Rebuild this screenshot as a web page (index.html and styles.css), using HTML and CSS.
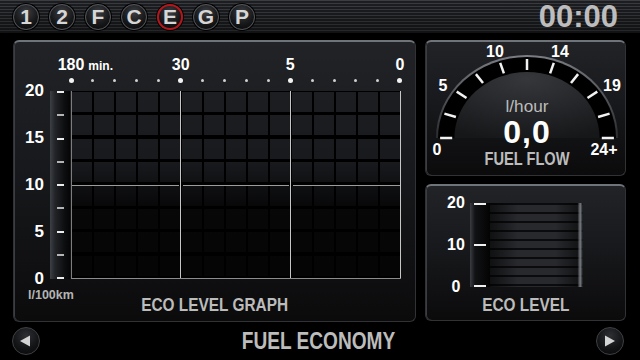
FILE: index.html
```html
<!DOCTYPE html>
<html lang="en">

<head>
  <meta charset="UTF-8" />
  <meta name="viewport" content="width=device-width, initial-scale=1.0" />
  <title>Fuel Economy</title>
  <link rel="stylesheet" href="styles.css">
</head>

<body>
  <div class="screen">

    <header class="topbar">
      <nav class="modes">
        <span class="mode">1</span>
        <span class="mode">2</span>
        <span class="mode">F</span>
        <span class="mode">C</span>
        <span class="mode active">E</span>
        <span class="mode">G</span>
        <span class="mode">P</span>
      </nav>
      <div class="clock">00:00</div>
    </header>

    <main class="content">

      <!-- eco level history graph -->
      <section class="panel graph-panel">
        <div class="xaxis">
          <div class="xlabels">
            <span class="xl"><b>180<i class="min">min.</i></b></span>
            <span class="xl"><b>30</b></span>
            <span class="xl"><b>5</b></span>
            <span class="xl"><b>0</b></span>
          </div>
          <div class="xdots">
            <span class="dot big"></span><span class="dot"></span><span class="dot"></span><span class="dot"></span><span class="dot"></span>
            <span class="dot big"></span><span class="dot"></span><span class="dot"></span><span class="dot"></span><span class="dot"></span>
            <span class="dot big"></span><span class="dot"></span><span class="dot"></span><span class="dot"></span><span class="dot"></span>
            <span class="dot big"></span>
          </div>
        </div>

        <div class="plot-row">
          <div class="ylabels">
            <span>20</span>
            <span>15</span>
            <span>10</span>
            <span>5</span>
            <span>0</span>
          </div>
          <div class="ybar">
            <i></i><i class="minor"></i><i></i><i class="minor"></i><i></i><i class="minor"></i><i></i><i class="minor"></i><i></i>
          </div>
          <div class="plot">
            <span class="hline h1"></span>
            <span class="hline h2"></span>
            <span class="hline h3"></span>
            <span class="vline v1"></span>
            <span class="vline v2"></span>
            <span class="vline v3"></span>
          </div>
        </div>

        <div class="graph-foot">
          <div class="unit">l/100km</div>
          <div class="panel-title"><span>ECO LEVEL GRAPH</span></div>
          <div></div>
        </div>
      </section>

      <div class="side">
        <!-- fuel flow gauge -->
        <section class="panel gauge-panel">
          <svg class="gauge" viewBox="426 42 199 133" width="199" height="133">
            <defs>
              <linearGradient id="rim" x1="0" y1="0" x2="0" y2="1">
                <stop offset="0" stop-color="#7a7d83" />
                <stop offset="1" stop-color="#2a2b2f" />
              </linearGradient>
              <radialGradient id="dome" cx="0.5" cy="0.1" r="0.95">
                <stop offset="0" stop-color="#35373b" />
                <stop offset="1" stop-color="#161719" />
              </radialGradient>
            </defs>
            <path d="M436 138 A91 83 0 0 1 618 138 Z" fill="url(#rim)" />
            <path d="M438 138 A89 81 0 0 1 616 138 Z" fill="#000" />
            <path d="M454.4 138 A72.6 66 0 0 1 599.6 138 Z" fill="url(#dome)" />
            <g stroke="#f2f2f2" stroke-width="2.5">
              <line x1="452.2" y1="138" x2="440.1" y2="138" />
              <line x1="455.9" y1="117" x2="444.4" y2="113.6" />
              <line x1="466.5" y1="98" x2="456.7" y2="91.6" />
              <line x1="483" y1="83" x2="475.9" y2="74.1" />
              <line x1="503.9" y1="73.3" x2="500.2" y2="62.9" />
              <line x1="527" y1="70" x2="527" y2="59" />
              <line x1="550.1" y1="73.3" x2="553.8" y2="62.9" />
              <line x1="571" y1="83" x2="578.1" y2="74.1" />
              <line x1="587.5" y1="98" x2="597.3" y2="91.6" />
              <line x1="598.1" y1="117" x2="609.6" y2="113.6" />
              <line x1="601.8" y1="138" x2="613.9" y2="138" />
            </g>
            <text class="g-num" x="437" y="155">0</text>
            <text class="g-num" x="443" y="91">5</text>
            <text class="g-num" x="495" y="57">10</text>
            <text class="g-num" x="560" y="57">14</text>
            <text class="g-num" x="612" y="91">19</text>
            <text class="g-num" x="604" y="155">24+</text>
            <text class="g-unit" x="505.5" y="112" textLength="43" lengthAdjust="spacingAndGlyphs">l/hour</text>
            <text class="g-value" x="527" y="143">0,0</text>
            <text class="g-title" x="484.5" y="165" textLength="85" lengthAdjust="spacingAndGlyphs">FUEL FLOW</text>
          </svg>
        </section>

        <!-- current eco level -->
        <section class="panel eco-panel">
          <div class="eco-scale">
            <div class="eco-labels">
              <span>20</span>
              <span>10</span>
              <span>0</span>
            </div>
            <div class="eco-bar">
              <i></i><i></i><i></i>
            </div>
            <div class="eco-box"></div>
          </div>
          <div class="panel-title"><span>ECO LEVEL</span></div>
        </section>
      </div>

    </main>

    <footer class="bottombar">
      <button class="nav-btn prev" aria-label="Previous">
        <svg width="12" height="12" viewBox="0 0 12 12"><polygon points="1,6 11,0.5 11,11.5" fill="#d4d4d4" /></svg>
      </button>
      <h1 class="page-title">FUEL ECONOMY</h1>
      <button class="nav-btn next" aria-label="Next">
        <svg width="12" height="12" viewBox="0 0 12 12"><polygon points="11,6 1,0.5 1,11.5" fill="#d4d4d4" /></svg>
      </button>
    </footer>

  </div>
</body>

</html>
```

FILE: styles.css
```css
* {
  box-sizing: border-box;
}

body {
  margin: 0;
  background: #000;
  font-family: "Liberation Sans", Arial, sans-serif;
  color: #fff;
}

.screen {
  width: 640px;
  height: 360px;
  overflow: hidden;
  display: flex;
  flex-direction: column;
  background: #000;
}

/* top bar */
.topbar {
  flex: none;
  height: 33px;
  display: flex;
  align-items: center;
  padding: 0 22px 0 13px;
  background:
    linear-gradient(to bottom, rgba(0, 0, 0, 0) 0%, rgba(0, 0, 0, 0.4) 100%),
    repeating-linear-gradient(to bottom, #3c3d41 0 1px, #1d1e21 1px 3px);
}

.modes {
  display: flex;
  gap: 10px;
}

.mode {
  width: 26px;
  height: 26px;
  border-radius: 50%;
  display: flex;
  align-items: center;
  justify-content: center;
  font-size: 21px;
  font-weight: 700;
  color: #d6d6d6;
  background: radial-gradient(circle at 50% 30%, #3d3e42 0%, #18191b 55%, #050505 100%);
  border: 1px solid #55565a;
  box-shadow: 0 0 0 1px #000;
}

.mode.active {
  border: 2px solid #b5161b;
}

.clock {
  margin-left: auto;
  font-size: 31px;
  font-weight: 700;
  color: #bdbdbd;
}

/* main area */
.content {
  flex: none;
  height: 289px;
  display: flex;
  gap: 9px;
  padding: 7px 14px 0 13px;
}

.panel {
  border-radius: 6px;
  border: 1px solid #303236;
  border-top: 2px solid #6f737a;
  background: linear-gradient(to bottom, #222327 0%, #18191c 45%, #0b0b0c 100%);
  box-shadow: inset 1px 0 0 #3b3d42;
}

.panel-title {
  font-size: 19px;
  font-weight: 700;
  line-height: 20px;
  color: #bcbcbc;
  text-align: center;
}

.panel-title span {
  display: inline-block;
  transform: scaleX(0.81);
}

.graph-panel {
  width: 403px;
  height: 282px;
  padding-top: 15px;
}

.xaxis {
  margin-left: 57px;
}

.xlabels {
  width: 329px;
  height: 16px;
  display: flex;
  justify-content: space-between;
}

.xl {
  width: 0;
  display: flex;
  justify-content: center;
  font-size: 16px;
  line-height: 16px;
  white-space: nowrap;
}

.xl b {
  position: relative;
}

.xl .min {
  position: absolute;
  left: calc(100% + 4px);
  bottom: 1px;
  font-size: 12px;
  line-height: 12px;
  font-style: normal;
}

.xdots {
  margin: 4px 0 0 -3px;
  width: 335px;
  height: 6px;
  display: flex;
  justify-content: space-between;
}

.dot {
  width: 6px;
  height: 6px;
  display: flex;
  align-items: center;
  justify-content: center;
}

.dot::before {
  content: "";
  width: 3px;
  height: 3px;
  border-radius: 50%;
  background: #d0d0d0;
}

.dot.big::before {
  width: 5px;
  height: 5px;
  background: #f2f2f2;
}

.plot-row {
  margin-top: 8px;
  height: 188px;
  display: flex;
}

.ylabels {
  width: 30px;
  margin: -8px 0;
  display: flex;
  flex-direction: column;
  justify-content: space-between;
  align-items: flex-end;
  font-size: 17px;
  font-weight: 700;
  line-height: 16px;
}

.ybar {
  margin-left: 6px;
  width: 20px;
  display: flex;
  flex-direction: column;
  justify-content: space-between;
  align-items: center;
  background: linear-gradient(to right, #3d4045 0%, #222428 25%, #0e0f11 70%, #050505 100%);
}

.ybar i {
  width: 7px;
  height: 2px;
  background: #ececec;
}

.ybar i.minor {
  background: #b4b4b4;
}

.plot {
  position: relative;
  margin-left: 1px;
  width: 330px;
  height: 188px;
  border-left: 1px solid #7d7d7d;
  border-bottom: 1px solid #8c8c8c;
  background:
    linear-gradient(to bottom, rgba(0, 0, 0, 0) 0%, rgba(0, 0, 0, 0.15) 38%, rgba(0, 0, 0, 0.75) 62%, rgba(0, 0, 0, 0.85) 100%),
    repeating-linear-gradient(to right, rgba(0, 0, 0, 0) 0 20px, #000 20px 22px),
    repeating-linear-gradient(to bottom, #000 0 1px, rgba(0, 0, 0, 0) 1px 21px, #000 21px 23.4px),
    #1d1e22;
}

.vline {
  position: absolute;
  top: 0;
  bottom: 0;
  width: 1px;
  background: #c6c6c6;
}

.v1 { left: 108px; }
.v2 { left: 218px; }
.v3 { left: 328px; }

.hline {
  position: absolute;
  top: 94px;
  height: 1px;
  background: #9c9c9c;
}

.h1 { left: 0; width: 107px; }
.h2 { left: 111px; width: 106px; }
.h3 { left: 221px; width: 107px; }

.graph-foot {
  margin-top: 10px;
  display: grid;
  grid-template-columns: 1fr auto 1fr;
}

.unit {
  padding-left: 14px;
  font-size: 12.5px;
  font-weight: 700;
  line-height: 12px;
  color: #b4b4b4;
}

.graph-foot .panel-title {
  margin-top: 6px;
}

/* right column */
.side {
  width: 201px;
  display: flex;
  flex-direction: column;
  gap: 8px;
}

.gauge-panel {
  height: 136px;
}

.gauge {
  display: block;
}

.g-num {
  font-size: 16px;
  font-weight: 700;
  fill: #fff;
  text-anchor: middle;
}

.g-unit {
  font-size: 16px;
  fill: #bdbdbd;
}

.g-value {
  font-size: 32px;
  font-weight: 700;
  letter-spacing: 1px;
  fill: #fff;
  text-anchor: middle;
}

.g-title {
  font-size: 19px;
  font-weight: 700;
  fill: #bcbcbc;
}

.eco-panel {
  height: 137px;
  padding-top: 17px;
}

.eco-scale {
  margin-left: 20px;
  height: 84px;
  display: flex;
}

.eco-labels {
  width: 20px;
  margin: -7px 0;
  display: flex;
  flex-direction: column;
  justify-content: space-between;
  align-items: center;
  font-size: 16px;
  font-weight: 700;
  line-height: 14px;
}

.eco-bar {
  margin-left: 4px;
  width: 20px;
  display: flex;
  flex-direction: column;
  justify-content: space-between;
  align-items: center;
  background: linear-gradient(to right, #3a3d42 0%, #111214 25%, #030303 100%);
}

.eco-bar i {
  width: 12px;
  height: 2px;
  background: #f0f0f0;
}

.eco-box {
  width: 93px;
  background:
    linear-gradient(to right, rgba(0, 0, 0, 0.6) 0%, rgba(0, 0, 0, 0) 30%, rgba(0, 0, 0, 0) 70%, rgba(0, 0, 0, 0.5) 94%, rgba(130, 134, 140, 0.9) 97%, rgba(0, 0, 0, 0.6) 100%),
    repeating-linear-gradient(to bottom, #0b0b0d 0 2px, #27292d 2px 9px),
    #1a1b1e;
}

.eco-panel .panel-title {
  margin-top: 8px;
}

/* bottom bar */
.bottombar {
  flex: 1;
  display: grid;
  grid-template-columns: 1fr auto 1fr;
  align-items: center;
  padding: 0 16px 0 12px;
}

.nav-btn {
  width: 28px;
  height: 28px;
  padding: 0;
  border-radius: 50%;
  display: flex;
  align-items: center;
  justify-content: center;
  background: radial-gradient(circle at 50% 30%, #2e2f33 0%, #141517 55%, #050505 100%);
  border: 1px solid #3f4044;
  box-shadow: 0 0 0 1px #000;
}

.nav-btn.prev svg {
  margin-left: -2px;
}

.nav-btn.next {
  justify-self: end;
}

.page-title {
  margin: 0;
  font-size: 23px;
  font-weight: 700;
  color: #bcbcbc;
  transform: scaleX(0.83);
}
```
